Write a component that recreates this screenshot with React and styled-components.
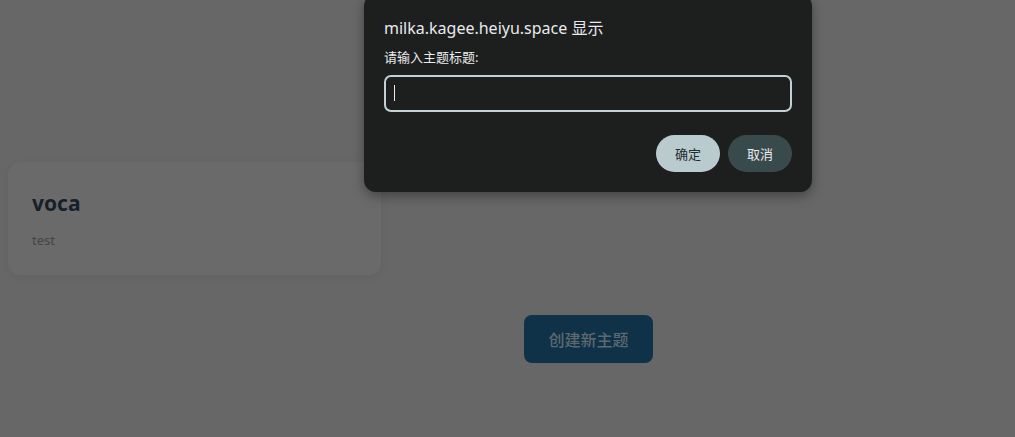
import styled, { createGlobalStyle } from "styled-components";

const GlobalStyle = createGlobalStyle`
    html, body {
        margin: 0;
        padding: 0;
        background: #666766;
        font-family: "Noto Sans", "Noto Sans CJK SC", sans-serif;
    }
`;

export default function App(){
    const topics = [{ title: "voca", desc: "test" }];

    return(
        <>
            <GlobalStyle />
            <Page>
                <TopicGrid>
                    {
                        topics.map((topic) => {
                            return <TopicCard key={topic.title} topic={topic}/>
                        })
                    }
                </TopicGrid>
                <Actions>
                    <CreateButton>创建新主题</CreateButton>
                </Actions>
            </Page>
            <PromptDialog
                origin="milka.kagee.heiyu.space"
                message="请输入主题标题:"
            />
        </>
    );
}

function TopicCard({ topic }){
    const { title, desc } = topic;
    return(
        <Card>
            <CardTitle>{title}</CardTitle>
            <CardDesc>{desc}</CardDesc>
        </Card>
    );
}

function PromptDialog({ origin, message }){
    return(
        <Dialog>
            <DialogTitle>{origin} 显示</DialogTitle>
            <DialogMessage>{message}</DialogMessage>
            <InputWrap>
                <PromptInput />
                <Caret />
            </InputWrap>
            <DialogButtons>
                <DialogButton primary>确定</DialogButton>
                <DialogButton>取消</DialogButton>
            </DialogButtons>
        </Dialog>
    );
}

const Page = styled.div`
    min-height: 100vh;
    box-sizing: border-box;
    padding: 162px 8px 40px 8px;
`;

const TopicGrid = styled.div`
    display: grid;
    grid-template-columns: 373px;
    gap: 16px;
`;

const Card = styled.div`
    background-color: #6a6a6a;
    border-radius: 12px;
    padding: 26px 24px 25px 24px;
    box-shadow: 0 2px 8px rgba(0, 0, 0, 0.05);
`;

const CardTitle = styled.div`
    font-size: 21px;
    font-weight: 700;
    line-height: 30px;
    color: #16202a;
`;

const CardDesc = styled.div`
    font-size: 13px;
    line-height: 20px;
    color: #424548;
    margin-top: 12px;
`;

const Actions = styled.div`
    display: flex;
    justify-content: center;
    padding-left: 162px;
    margin-top: 40px;
`;

const CreateButton = styled.button`
    height: 48px;
    padding: 0 24px;
    border: none;
    border-radius: 8px;
    background-color: #0f3249;
    color: #5e686e;
    font-family: "Noto Sans", "Noto Sans CJK SC", sans-serif;
    font-size: 16px;
    font-weight: 500;
`;

const Dialog = styled.div`
    position: absolute;
    top: -6px;
    left: 364px;
    width: 448px;
    box-sizing: border-box;
    padding: 22px 20px 20px 20px;
    background-color: #1d1f1e;
    border-radius: 12px;
    box-shadow: 0 4px 12px rgba(0, 0, 0, 0.35);
    color: #e8eaed;
`;

const DialogTitle = styled.div`
    font-size: 16px;
    line-height: 24px;
`;

const DialogMessage = styled.div`
    font-size: 13px;
    line-height: 18px;
    margin-top: 8px;
`;

const InputWrap = styled.div`
    position: relative;
    margin-top: 9px;
`;

const PromptInput = styled.input`
    display: block;
    width: 100%;
    box-sizing: border-box;
    height: 37px;
    padding: 0 9px;
    background: transparent;
    border: 2px solid #c3d1d4;
    border-radius: 7px;
    color: #e8eaed;
    font-size: 14px;
    outline: none;
`;

const Caret = styled.span`
    position: absolute;
    left: 10px;
    top: 10px;
    width: 1px;
    height: 16px;
    background-color: #e8eaed;
`;

const DialogButtons = styled.div`
    display: flex;
    justify-content: flex-end;
    gap: 8px;
    margin-top: 23px;
`;

const DialogButton = styled.button`
    width: 64px;
    height: 37px;
    border: none;
    border-radius: 19px;
    background-color: ${(p) => (p.primary ? "#bacbcf" : "#394a4d")};
    color: ${(p) => (p.primary ? "#1e2b2f" : "#e8eaed")};
    font-family: "Noto Sans", "Noto Sans CJK SC", sans-serif;
    font-size: 13px;
`;
